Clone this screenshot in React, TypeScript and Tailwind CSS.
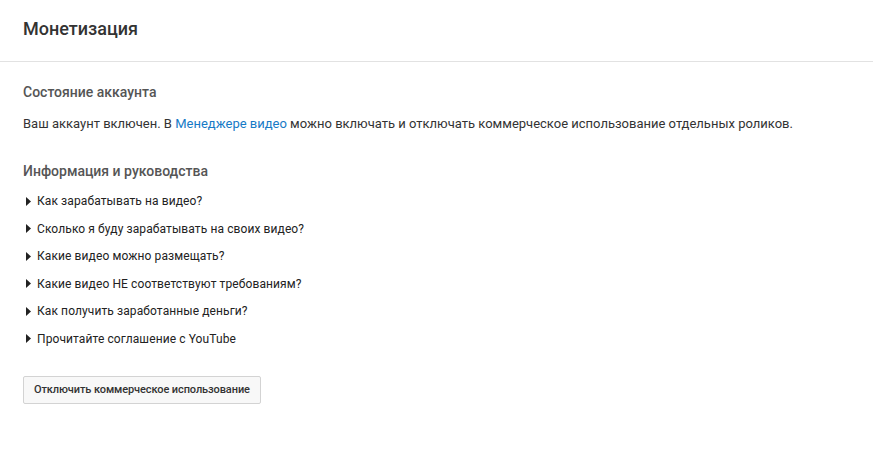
import React from "react";

const guides: string[] = [
    "Как зарабатывать на видео?",
    "Сколько я буду зарабатывать на своих видео?",
    "Какие видео можно размещать?",
    "Какие видео НЕ соответствуют требованиям?",
    "Как получить заработанные деньги?",
    "Прочитайте соглашение с YouTube",
];

const Arrow: React.FC = () => (
    <svg width="5" height="9" viewBox="0 0 5 9" className="shrink-0">
        <path d="M0 0 L5 4.5 L0 9 Z" fill="#222" />
    </svg>
);

export default function App() {
    return (
        <div className="min-h-[462px] w-[873px] bg-white font-['Roboto',sans-serif]">
            {/* Header */}
            <div className="h-[62px] border-b border-[#e2e2e2] px-[23px] pt-[17px]">
                <h1 className="text-[18px] leading-6 font-medium text-[#333]">Монетизация</h1>
            </div>

            <div className="px-[23px] pt-[21px]">
                {/* Account state */}
                <h2 className="text-[14px] leading-[18px] font-medium text-[#555]">Состояние аккаунта</h2>
                <p className="mt-[14px] text-[13px] leading-[18px] text-[#333]">
                    Ваш аккаунт включен. В <a className="text-[#167ac6]">Менеджере видео</a> можно включать и отключать коммерческое использование отдельных роликов.
                </p>

                {/* Guides */}
                <h2 className="mt-[29px] text-[14px] leading-[18px] font-medium text-[#555]">Информация и руководства</h2>
                <ul className="mt-[13px] flex flex-col gap-[11.5px]">
                    {guides.map((item, index) => (
                        <li key={index} className="flex items-center gap-[6px] pl-[3px] text-[12px] leading-4 tracking-[0.1px] text-[#222]">
                            <Arrow />
                            <span>{item}</span>
                        </li>
                    ))}
                </ul>

                <button className="mt-[29px] box-border h-[28px] rounded-[2px] border border-[#d3d3d3] bg-[#f8f8f8] px-[10px] text-[11px] leading-[26px] font-medium tracking-[-0.1px] text-[#333]">
                    Отключить коммерческое использование
                </button>
            </div>
        </div>
    );
}
